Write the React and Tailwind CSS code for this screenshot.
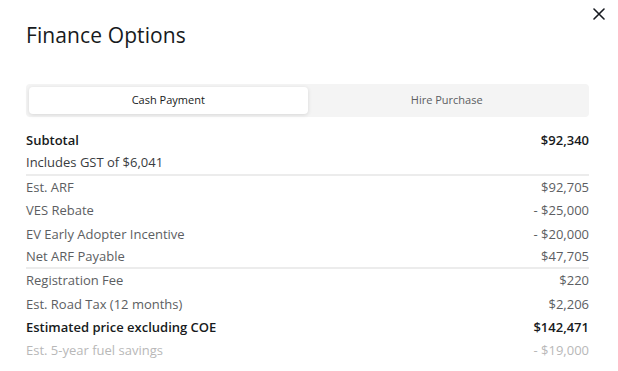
import React, { useState } from 'react'

const rows = [
  { label: 'Subtotal', value: '$92,340', bold: true },
  { label: 'Includes GST of $6,041', value: '', divider: true, note: true },
  { label: 'Est. ARF', value: '$92,705' },
  { label: 'VES Rebate', value: '- $25,000' },
  { label: 'EV Early Adopter Incentive', value: '- $20,000' },
  { label: 'Net ARF Payable', value: '$47,705', divider: true },
  { label: 'Registration Fee', value: '$220' },
  { label: 'Est. Road Tax (12 months)', value: '$2,206' },
  { label: 'Estimated price excluding COE', value: '$142,471', bold: true },
  { label: 'Est. 5-year fuel savings', value: '- $19,000', faded: true }
]

const App = () => {
  const [tab, setTab] = useState('cash')

  return (
    <div
      className="relative h-[371px] w-[618px] overflow-hidden bg-white pl-[26px] pr-[29px]"
      style={{ fontFamily: '"Open Sans", "Liberation Sans", sans-serif' }}
    >
      {/* Close */}
      <button className="absolute right-[13px] top-[8px] flex h-[12px] w-[12px] items-center justify-center text-[#171a20]">
        <svg width="12" height="12" viewBox="0 0 12 12" fill="none" stroke="currentColor" strokeWidth="1.6" strokeLinecap="round">
          <path d="M1 1L11 11M11 1L1 11" />
        </svg>
      </button>

      <h1 className="pt-[21px] text-[21px] font-normal leading-[28px] tracking-[0.005em] text-[#171a20]">Finance Options</h1>

      {/* Tabs */}
      <div className="mt-[35px] flex h-[33px] rounded-[4px] bg-[#f4f4f4] p-[3px]">
        <button
          onClick={() => setTab('cash')}
          className={`flex-1 rounded-[4px] text-[11px] ${
            tab === 'cash' ? 'bg-white text-[#171a20] shadow-[0_1px_4px_rgba(0,0,0,0.12)]' : 'text-[#5c5e62]'
          }`}
        >
          Cash Payment
        </button>
        <button
          onClick={() => setTab('hire')}
          className={`flex-1 rounded-[4px] text-[11px] ${
            tab === 'hire' ? 'bg-white text-[#171a20] shadow-[0_1px_4px_rgba(0,0,0,0.12)]' : 'text-[#5c5e62]'
          }`}
        >
          Hire Purchase
        </button>
      </div>

      {/* Price breakdown */}
      <div className="mt-[12px] flex flex-col">
        {rows.map((row) => (
          <div
            key={row.label}
            className={`flex h-[23.4px] items-center justify-between text-[13px] ${
              row.divider ? 'border-b-2 border-[#ececec]' : ''
            } ${
              row.bold
                ? 'font-semibold text-[#171a20]'
                : row.note
                ? 'text-[#393c41]'
                : row.faded
                ? 'text-[#b8b8b8]'
                : 'text-[#5c5e62]'
            }`}
          >
            <span>{row.label}</span>
            <span>{row.value}</span>
          </div>
        ))}
      </div>
    </div>
  )
}

export default App
